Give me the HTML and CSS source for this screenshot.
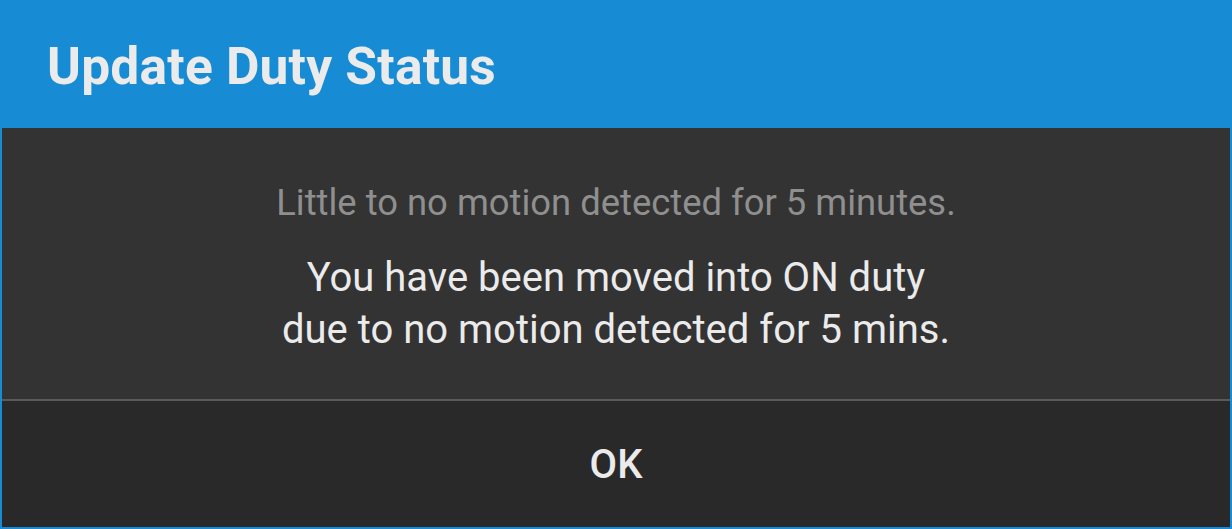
FILE: index.html
```html
<!DOCTYPE html>
<html>

<head>
    <link rel="stylesheet" href="styles.css">
</head>

<body>
    <div class="dialog">
        <div class="dialog-header">
            <h1>Update Duty Status</h1>
        </div>
        <div class="dialog-panel">
            <div class="dialog-content">
                <p class="note">Little to no motion detected for 5 minutes.</p>
                <p class="message">You have been moved into ON duty<br>due to no motion detected for 5 mins.</p>
            </div>
            <div class="dialog-actions">
                <button class="btn-ok">OK</button>
            </div>
        </div>
    </div>
</body>

</html>
```

FILE: styles.css
```css
* {
    margin: 0;
    box-sizing: border-box;
}

html,
body {
    height: 100%;
}

body {
    background: #178bd4;
    font-family: Roboto, "Noto Sans", sans-serif;
    color: #ebebeb;
}

.dialog {
    display: flex;
    flex-direction: column;
    height: 100vh;
}

.dialog-header {
    height: 128px;
    display: flex;
    align-items: center;
    padding-left: 47px;
    flex-shrink: 0;
}

.dialog-header h1 {
    font-size: 51.5px;
    font-weight: 700;
    letter-spacing: 0.2px;
    padding-top: 4px;
}

.dialog-panel {
    flex: 1;
    margin: 0 2px 2px;
    display: flex;
    flex-direction: column;
}

.dialog-content {
    height: 273px;
    background: #333333;
    border-bottom: 2px solid #5a5a5a;
    text-align: center;
    padding-top: 55px;
}

.note {
    font-size: 36.4px;
    line-height: 40px;
    color: #8f8f8f;
}

.message {
    margin-top: 29px;
    font-size: 40px;
    line-height: 52px;
}

.dialog-actions {
    flex: 1;
    background: #292929;
    display: flex;
}

.btn-ok {
    flex: 1;
    background: none;
    border: none;
    color: #ebebeb;
    font-family: Roboto, sans-serif;
    font-size: 40px;
    font-weight: 500;
    padding-top: 2px;
}
```
